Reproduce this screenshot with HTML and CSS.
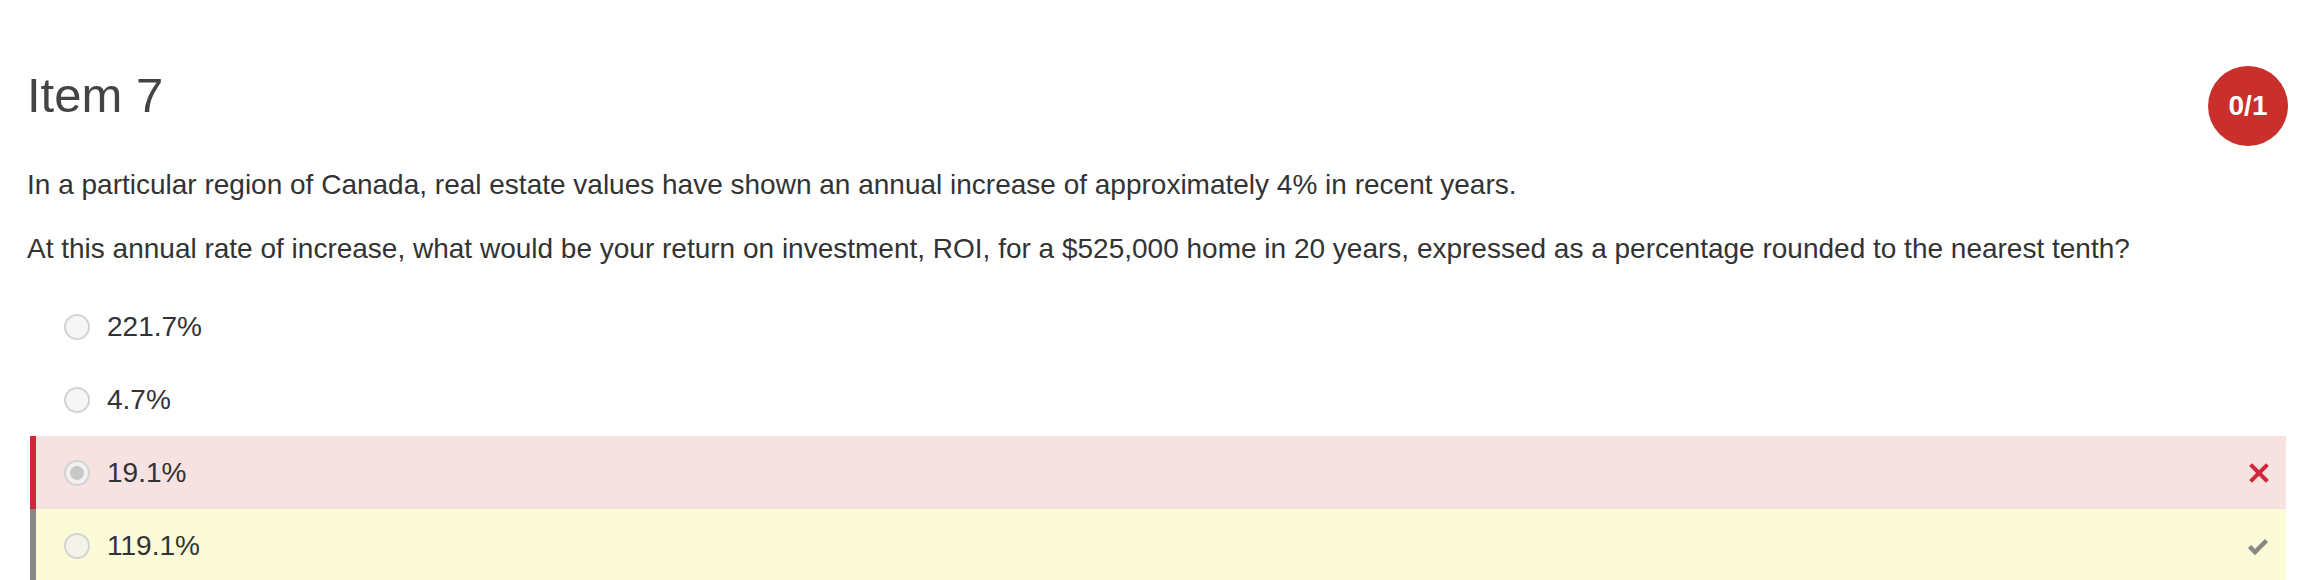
FILE: index.html
```html
<!DOCTYPE html>
<html>
<head>
<meta charset="utf-8">
<link rel="stylesheet" href="styles.css">
</head>
<body>
<div class="item">
  <div class="item-header">
    <h2 class="item-title">Item 7</h2>
    <div class="score-badge">0/1</div>
  </div>
  <p class="question">In a particular region of Canada, real estate values have shown an annual increase of approximately 4% in recent years.</p>
  <p class="question">At this annual rate of increase, what would be your return on investment, ROI, for a $525,000 home in 20 years, expressed as a percentage rounded to the nearest tenth?</p>
  <ul class="answers">
    <li class="answer"><span class="radio"></span><span class="answer-text">221.7%</span></li>
    <li class="answer"><span class="radio"></span><span class="answer-text">4.7%</span></li>
    <li class="answer answer-wrong"><span class="radio radio-selected"></span><span class="answer-text">19.1%</span>
      <svg class="mark" width="20" height="20" viewBox="0 0 20 20"><path d="M3 3 L17 17 M17 3 L3 17" stroke="#d0283a" stroke-width="4" stroke-linecap="square"/></svg>
    </li>
    <li class="answer answer-correct"><span class="radio"></span><span class="answer-text">119.1%</span>
      <svg class="mark" width="22" height="20" viewBox="0 0 22 20"><path d="M2.5 10.5 L8 16 L19.5 4.5" fill="none" stroke="#888" stroke-width="4.5"/></svg>
    </li>
  </ul>
</div>
</body>
</html>
```
FILE: styles.css
```css
html, body {
  margin: 0;
  padding: 0;
  background: #fff;
}
body {
  font-family: "Liberation Sans", Arial, Helvetica, sans-serif;
  color: #333;
}
.item {
  padding: 0 14px 0 27px;
}
.item-header {
  display: flex;
  justify-content: space-between;
  align-items: flex-start;
  height: 60px;
  padding-top: 65px;
}
.item-title {
  margin: 0;
  font-size: 49px;
  font-weight: normal;
  color: #444;
  line-height: 60px;
}
.score-badge {
  flex: none;
  width: 80px;
  height: 80px;
  border-radius: 50%;
  background: #c9302c;
  color: #fff;
  font-weight: bold;
  font-size: 28px;
  display: flex;
  align-items: center;
  justify-content: center;
  margin-top: 1px;
  margin-right: -2px;
}
.question {
  margin: 0;
  font-size: 28px;
  line-height: 40px;
}
.question:first-of-type {
  margin-top: 40px;
}
.question + .question {
  margin-top: 24px;
}
.answers {
  list-style: none;
  margin: 21px 0 0 3px;
  padding: 0;
}
.answer {
  display: flex;
  align-items: center;
  height: 73px;
  border-left: 6px solid transparent;
  padding: 0 17px 0 28px;
  font-size: 28px;
}
.answer-wrong {
  background: #f7e2e2;
  border-left-color: #d0283a;
}
.answer-correct {
  background: #fcfbd7;
  border-left-color: #888;
}
.radio {
  width: 22px;
  height: 22px;
  border: 2px solid #d4d4d4;
  border-radius: 50%;
  background: #f6f6f6;
  display: flex;
  align-items: center;
  justify-content: center;
  flex: none;
}
.radio-selected::after {
  content: "";
  width: 14px;
  height: 14px;
  border-radius: 50%;
  background: #c8c8c8;
}
.answer-wrong .radio {
  background: #f3f0f0;
}
.answer-correct .radio {
  background: #f4f3ea;
}
.answer-text {
  margin-left: 17px;
  flex: 1;
}
.mark {
  flex: none;
}
```
